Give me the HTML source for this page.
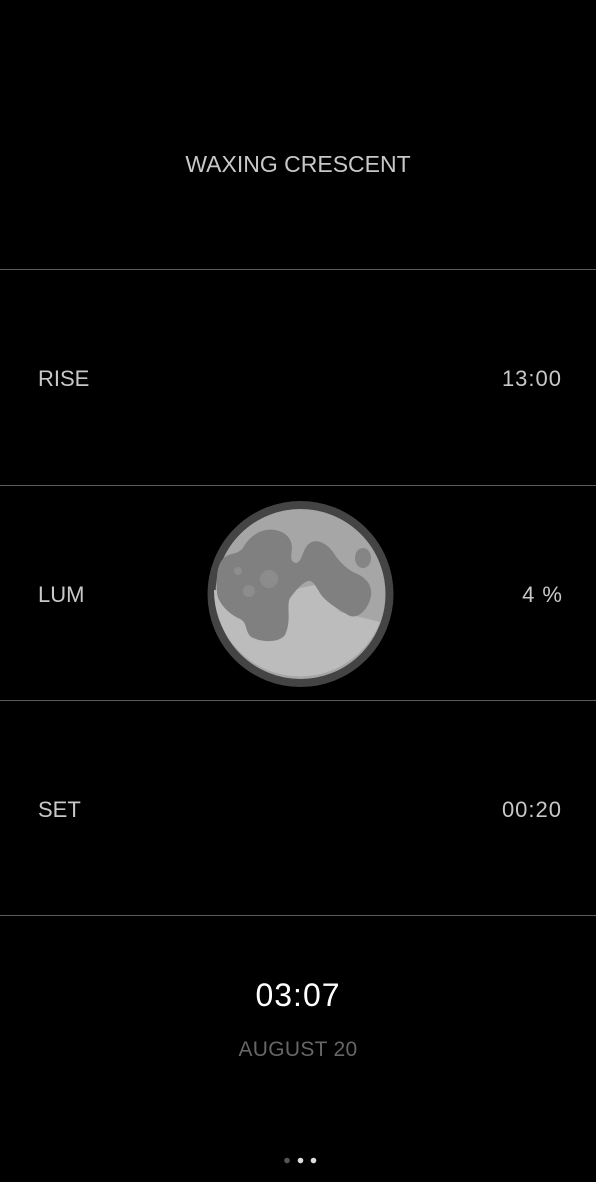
<!DOCTYPE html>
<html><head><style>
body{margin:0;background:#000;width:596px;height:1182px;overflow:hidden;position:relative;font-family:"Liberation Sans",sans-serif;color:#c8c8c8}
.l{position:absolute;left:0;width:596px;height:1px;background:#5a5a5a}
.t{position:absolute;font-size:22px}
.n{letter-spacing:1px}
</style></head><body>
<div class="t" style="left:0;width:596px;text-align:center;top:151px;font-size:23px">WAXING CRESCENT</div>
<div class="l" style="top:269px"></div>
<div class="t" style="left:38px;top:366px">RISE</div>
<div class="t n" style="right:34px;top:366px">13:00</div>
<div class="l" style="top:485px"></div>
<div class="t" style="left:38px;top:582px">LUM</div>
<div class="t n" style="right:33px;top:582px">4 %</div>
<div class="l" style="top:700px"></div>
<div class="t" style="left:38px;top:797px">SET</div>
<div class="t n" style="right:34px;top:797px">00:20</div>
<div class="l" style="top:915px"></div>
<div class="t" style="left:0;width:596px;text-align:center;top:977px;font-size:32px;color:#fff;letter-spacing:1px">03:07</div>
<div class="t" style="left:0;width:596px;text-align:center;top:1038px;font-size:21px;color:#666;letter-spacing:0.3px">AUGUST 20</div>
<svg width="596" height="1182" style="position:absolute;left:0;top:0">
<circle cx="300.5" cy="594" r="89" fill="#a6a6a6" stroke="#444" stroke-width="8"/>
<path d="M214,590 A86,86 0 0 0 380,622 L340,612 L315,585 L300,588 L285,595 Z" fill="#bcbcbc"/>
<path d="M243,548 C250,535 262,528 275,530 C287,532 292,540 292,548 C291,556 290,562 296,563 C303,562 302,548 310,543 C318,538 328,545 333,552 C338,560 345,568 355,573 C368,578 374,588 370,600 C366,612 356,620 348,615 C340,610 330,605 322,596 C316,588 314,580 308,581 C300,584 295,592 290,598 C286,606 292,620 285,635 C278,644 258,642 250,636 C244,628 248,622 238,618 C226,612 216,600 217,590 C216,575 218,565 222,560 C228,552 236,556 243,548 Z" fill="#808080"/>
<circle cx="238" cy="571" r="4" fill="#8e8e8e"/>
<circle cx="269" cy="579" r="9" fill="#8c8c8c"/>
<circle cx="249" cy="591" r="6" fill="#8c8c8c"/>
<ellipse cx="363" cy="558" rx="8" ry="10" fill="#858585"/>
<circle cx="287" cy="1160.5" r="2.8" fill="#555"/>
<circle cx="300.5" cy="1160.5" r="2.8" fill="#ddd"/>
<circle cx="313.5" cy="1160.5" r="2.8" fill="#ddd"/>
</svg>
</body></html>
